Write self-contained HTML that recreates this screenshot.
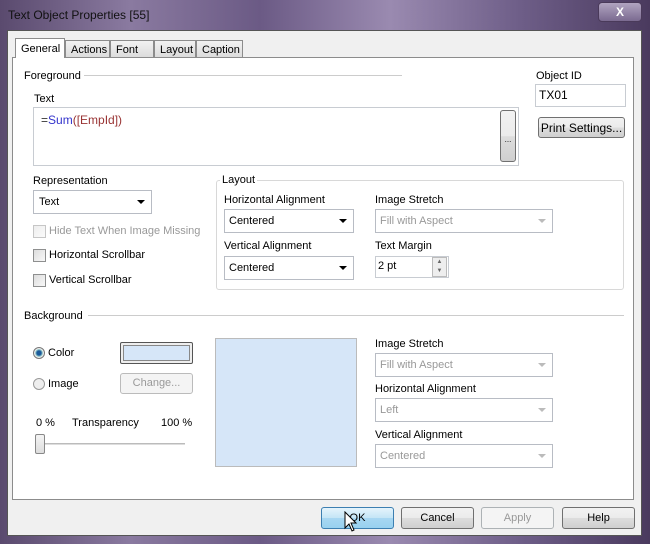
<!DOCTYPE html><html><head><style>
*{margin:0;padding:0;box-sizing:border-box}
body{width:650px;height:544px;overflow:hidden;position:relative;font-family:"Liberation Sans",sans-serif;font-size:11px;color:#000;background:linear-gradient(90deg,#5a4a6e,#8a7aa0 20%,#6b5a85 40%,#9a8ab0 60%,#6e5e88 80%,#4a3a5e)}
div,span{position:absolute}
.t{white-space:nowrap}
.in{background:#fff;border:1px solid #c8ccd2}
.dd{background:#fff;border:1px solid #b8bcc4}
.dd .a{right:6px;top:9px;width:0;height:0;border-left:4px solid transparent;border-right:4px solid transparent;border-top:4px solid #000}
.dis{color:#999}
.dis .a{border-top-color:#bbb}
.btn{border:1px solid #707070;border-radius:3px;background:linear-gradient(#f2f2f2,#ebebeb 50%,#dddddd 51%,#cfcfcf);text-align:center}
.cb{width:13px;height:13px;border:1px solid #8e8f8f;background:linear-gradient(135deg,#ddd,#f8f8f8)}
.sep{height:1px;background:#ccc}
</style></head><body>
<div class="t" style="left:8px;top:8px;font-size:12px;color:#111">Text Object Properties [55]</div>
<div style="left:598px;top:2px;width:44px;height:20px;border:1px solid #4a3a5a;border-radius:4px;background:linear-gradient(#b0a4c0,#7a6a90);color:#fff;text-align:center;font-weight:bold;font-size:12px;line-height:18px">X</div>
<div style="left:7px;top:30px;width:635px;height:506px;background:#f0f0f0;border:1px solid #555"></div>
<!-- tabs -->
<div class="t" style="left:15px;top:38px;width:50px;height:20px;background:#fff;border:1px solid #8c8c8c;border-bottom:none;padding:4px 5px;font-size:11px">General</div>
<div class="t" style="left:65px;top:40px;width:45px;height:18px;background:linear-gradient(#f2f2f2,#dcdcdc);border:1px solid #8c8c8c;padding:3px 5px">Actions</div>
<div class="t" style="left:110px;top:40px;width:44px;height:18px;background:linear-gradient(#f2f2f2,#dcdcdc);border:1px solid #8c8c8c;padding:3px 5px">Font</div>
<div class="t" style="left:154px;top:40px;width:42px;height:18px;background:linear-gradient(#f2f2f2,#dcdcdc);border:1px solid #8c8c8c;padding:3px 5px">Layout</div>
<div class="t" style="left:196px;top:40px;width:47px;height:18px;background:linear-gradient(#f2f2f2,#dcdcdc);border:1px solid #8c8c8c;padding:3px 5px">Caption</div>
<div style="left:12px;top:57px;width:622px;height:443px;background:#fff;border:1px solid #8c8c8c;border-top:1px solid #8c8c8c"></div>
<div style="left:16px;top:57px;width:48px;height:2px;background:#fff"></div>
<!-- foreground -->
<div class="t" style="left:24px;top:70px">Foreground</div>
<div class="sep" style="left:84px;top:75px;width:318px"></div>
<div class="t" style="left:34px;top:93px">Text</div>
<div class="in" style="left:33px;top:107px;width:486px;height:59px"></div>
<div class="t" style="left:41px;top:113px;font-size:12px;color:#333">=<span style="position:static;color:#3333cc">Sum</span><span style="position:static;color:#993333">([EmpId])</span></div>
<div class="btn" style="left:500px;top:110px;width:16px;height:52px;font-size:8px;padding-top:24px">...</div>
<div class="t" style="left:536px;top:70px">Object ID</div>
<div class="in" style="left:535px;top:84px;width:91px;height:23px;padding:3px 3px;font-size:12px">TX01</div>
<div class="btn t" style="left:538px;top:117px;width:87px;height:21px;padding-top:3px;font-size:12px">Print Settings...</div>
<!-- representation -->
<div class="t" style="left:33px;top:175px">Representation</div>
<div class="dd" style="left:33px;top:190px;width:119px;height:24px;padding:5px 5px">Text<span class="a"></span></div>
<div class="cb" style="left:33px;top:225px;opacity:.5"></div><div class="t dis" style="left:49px;top:225px">Hide Text When Image Missing</div>
<div class="cb" style="left:33px;top:249px"></div><div class="t" style="left:49px;top:249px">Horizontal Scrollbar</div>
<div class="cb" style="left:33px;top:274px"></div><div class="t" style="left:49px;top:274px">Vertical Scrollbar</div>
<!-- layout group -->
<div style="left:216px;top:180px;width:408px;height:110px;border:1px solid #d8d8d8;border-radius:3px"></div>
<div class="t" style="left:220px;top:174px;background:#fff;padding:0 2px">Layout</div>
<div class="t" style="left:224px;top:194px">Horizontal Alignment</div>
<div class="dd" style="left:224px;top:209px;width:130px;height:24px;padding:5px 4px">Centered<span class="a"></span></div>
<div class="t" style="left:224px;top:240px">Vertical Alignment</div>
<div class="dd" style="left:224px;top:256px;width:130px;height:24px;padding:5px 4px">Centered<span class="a"></span></div>
<div class="t" style="left:375px;top:194px">Image Stretch</div>
<div class="dd dis" style="left:375px;top:209px;width:178px;height:24px;padding:5px 4px">Fill with Aspect<span class="a"></span></div>
<div class="t" style="left:375px;top:240px">Text Margin</div>
<div class="in" style="left:375px;top:256px;width:74px;height:22px;padding:3px 2px">2 pt</div>
<div style="left:432px;top:257px;width:15px;height:20px;border:1px solid #bbb;background:#eee;font-size:6px;color:#666;text-align:center;line-height:9px">▲<br>▼</div>
<!-- background -->
<div class="t" style="left:24px;top:310px">Background</div>
<div class="sep" style="left:88px;top:315px;width:536px"></div>
<div style="left:33px;top:347px;width:12px;height:12px;border-radius:50%;border:1px solid #777;background:radial-gradient(#1a5a9a 30%,#9cc 50%,#eee 60%)"></div>
<div class="t" style="left:48px;top:347px">Color</div>
<div style="left:120px;top:342px;width:73px;height:22px;border:1px solid #555;border-radius:2px;padding:2px;background:#eee"><div style="left:2px;top:2px;right:2px;bottom:2px;background:#d6e6f8;border:1px solid #888"></div></div>
<div style="left:33px;top:378px;width:12px;height:12px;border-radius:50%;border:1px solid #999;background:#eee"></div>
<div class="t" style="left:48px;top:378px">Image</div>
<div class="btn dis" style="left:120px;top:373px;width:73px;height:21px;border-color:#bbb;background:#f4f4f4;padding-top:3px">Change...</div>
<div class="t" style="left:36px;top:417px">0 %</div>
<div class="t" style="left:72px;top:417px">Transparency</div>
<div class="t" style="left:161px;top:417px">100 %</div>
<div style="left:40px;top:443px;width:145px;height:2px;background:#ddd;border-top:1px solid #bbb"></div>
<div style="left:35px;top:434px;width:10px;height:20px;border:1px solid #888;border-radius:2px;background:linear-gradient(#f4f4f4,#ddd)"></div>
<div style="left:215px;top:338px;width:142px;height:129px;background:#d6e6f8;border:1px solid #bbb"></div>
<div class="t" style="left:375px;top:338px">Image Stretch</div>
<div class="dd dis" style="left:375px;top:353px;width:178px;height:24px;padding:5px 4px">Fill with Aspect<span class="a"></span></div>
<div class="t" style="left:375px;top:383px">Horizontal Alignment</div>
<div class="dd dis" style="left:375px;top:398px;width:178px;height:24px;padding:5px 4px">Left<span class="a"></span></div>
<div class="t" style="left:375px;top:429px">Vertical Alignment</div>
<div class="dd dis" style="left:375px;top:444px;width:178px;height:24px;padding:5px 4px">Centered<span class="a"></span></div>
<!-- buttons -->
<div class="btn" style="left:321px;top:507px;width:73px;height:22px;padding-top:4px;border-color:#3c7fb1;background:linear-gradient(#e5f4fc,#c4e5f6 50%,#a8d7f2 51%,#98d1ef)">OK</div>
<div class="btn" style="left:401px;top:507px;width:73px;height:22px;padding-top:4px">Cancel</div>
<div class="btn dis" style="left:481px;top:507px;width:73px;height:22px;padding-top:4px;border-color:#adb2b5;background:#f4f4f4">Apply</div>
<div class="btn" style="left:562px;top:507px;width:73px;height:22px;padding-top:4px">Help</div>
<svg style="position:absolute;left:344px;top:511px" width="14" height="22" viewBox="0 0 14 22"><path d="M1 1 L1 17 L5 13 L8 20 L10 19 L7 12 L12 12 Z" fill="#fff" stroke="#000" stroke-width="1"/></svg>
</body></html>
